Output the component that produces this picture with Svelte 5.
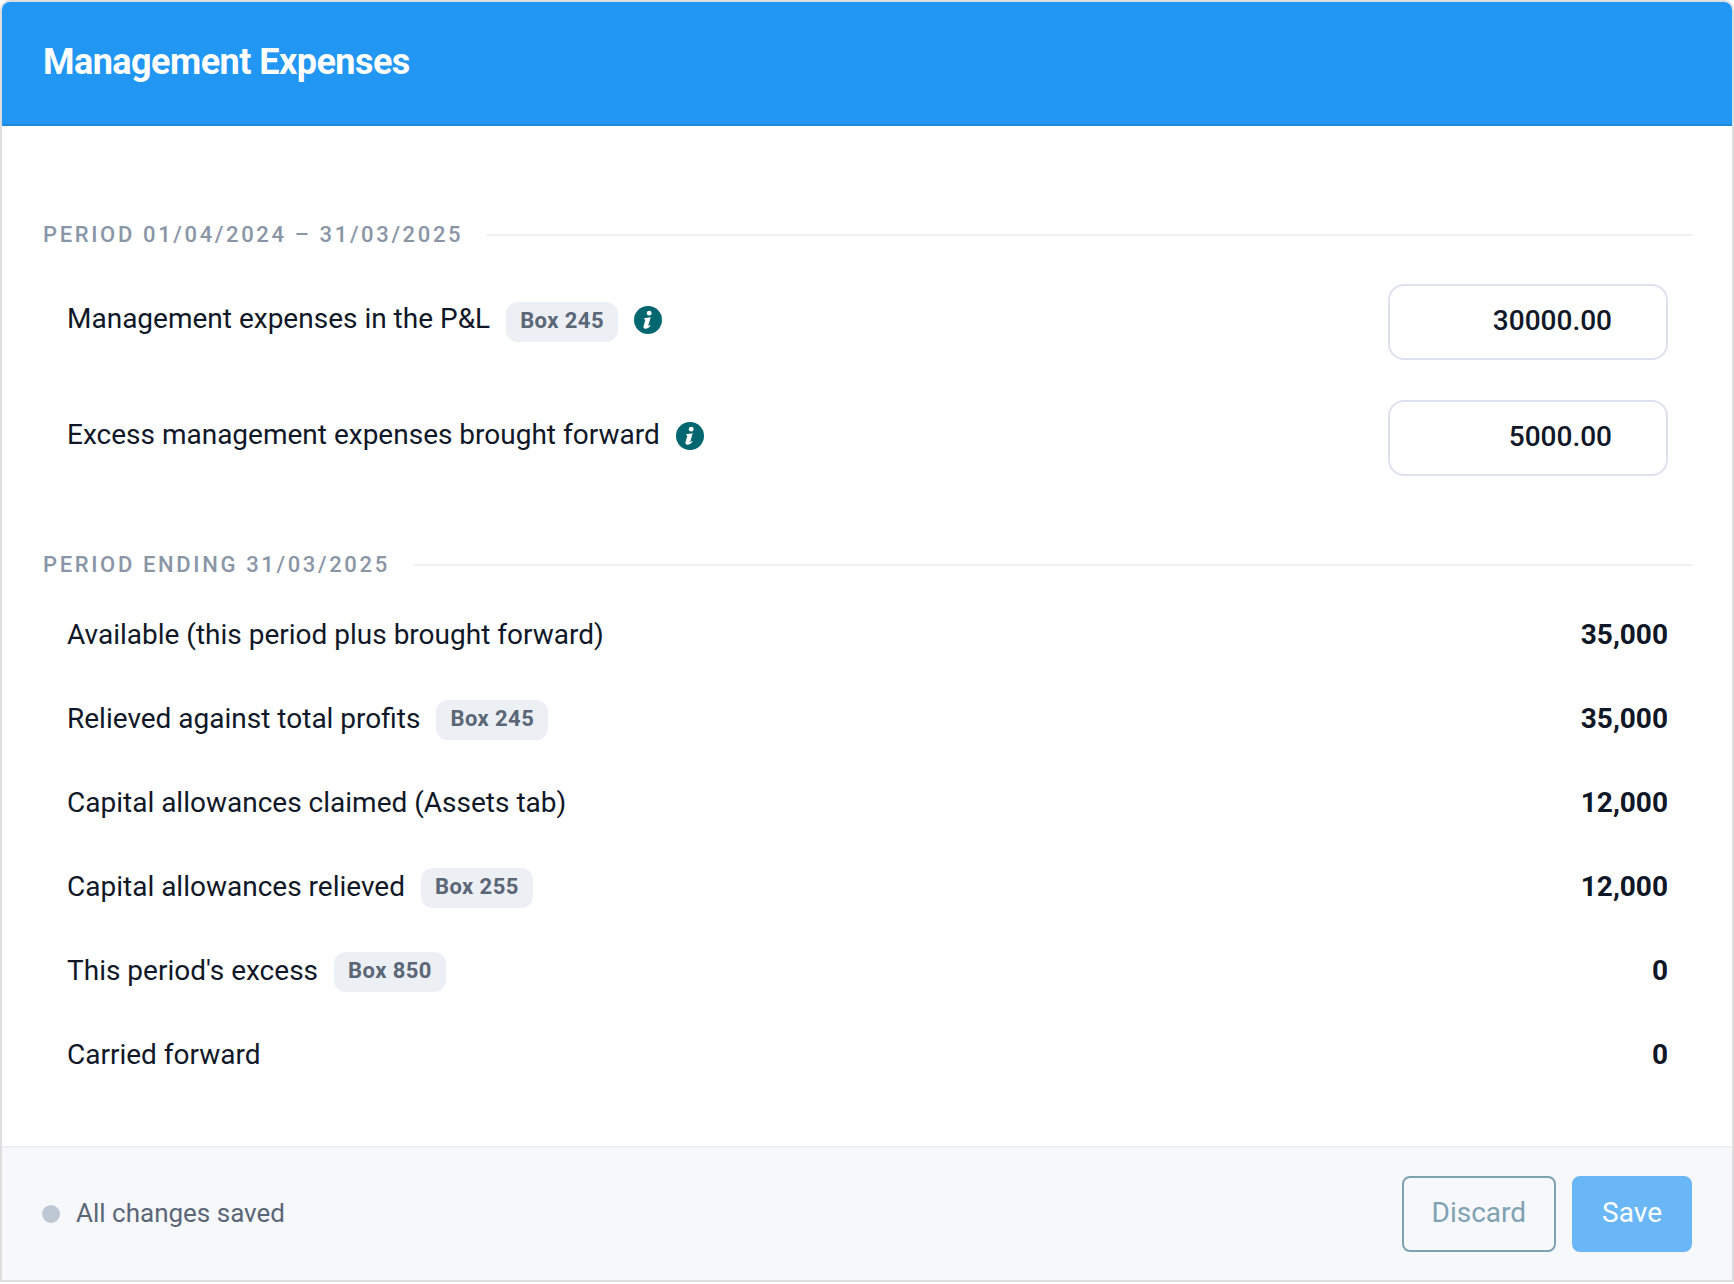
<script>
  let inputs = [
    { id: "pl", label: "Management expenses in the P&L", box: "Box 245", value: "30000.00" },
    { id: "bf", label: "Excess management expenses brought forward", box: "", value: "5000.00" }
  ];

  const results = [
    { label: "Available (this period plus brought forward)", value: "35,000" },
    { label: "Relieved against total profits", box: "Box 245", value: "35,000" },
    { label: "Capital allowances claimed (Assets tab)", value: "12,000" },
    { label: "Capital allowances relieved", box: "Box 255", value: "12,000" },
    { label: "This period's excess", box: "Box 850", value: "0" },
    { label: "Carried forward", value: "0" }
  ];
</script>

<form class="card" on:submit|preventDefault>
  <header class="card-header">
    <h1>Management Expenses</h1>
  </header>

  <div class="card-body">
    <h2 class="section-title">Period 01/04/2024 – 31/03/2025</h2>
    {#each inputs as row}
      <div class="row input-row">
        <div class="row-label">
          <label class="name" for={row.id}>{row.label}</label>
          {#if row.box}
            <span class="badge">{row.box}</span>
          {/if}
          <button type="button" class="info" aria-label="Info">
            <svg viewBox="0 0 28 28" width="28" height="28" aria-hidden="true">
              <circle cx="14" cy="14" r="14" fill="#006770" />
              <circle cx="15.2" cy="7.2" r="2.4" fill="#fff" />
              <path
                d="M10.2 12.3 L16.7 11.3 L14.3 19.4 C14.1 20.2 14.6 20.2 15.9 18.9 L16.7 19.6 C14.7 22 12.8 22.9 11.2 22.7 C9.4 22.4 9.2 21.1 9.6 19.7 L11.2 14.4 C11.4 13.6 11.1 13.4 10 13.3 Z"
                fill="#fff"
              />
            </svg>
          </button>
        </div>
        <input id={row.id} type="text" inputmode="decimal" bind:value={row.value} />
      </div>
    {/each}

    <h2 class="section-title results-title">Period ending 31/03/2025</h2>
    {#each results as row}
      <div class="row">
        <div class="row-label">
          <span class="name">{row.label}</span>
          {#if row.box}
            <span class="badge">{row.box}</span>
          {/if}
        </div>
        <span class="value">{row.value}</span>
      </div>
    {/each}
  </div>

  <footer class="card-footer">
    <span class="dot"></span>
    <span class="status">All changes saved</span>
    <button type="button" class="btn discard" disabled>Discard</button>
    <button type="submit" class="btn save" disabled>Save</button>
  </footer>
</form>

<style>
  :global(body) {
    background: #fff;
    font-family: Roboto, "Liberation Sans", sans-serif;
    color: #101828;
  }

  .card {
    margin: 2px;
    border-radius: 8px 8px 0 0;
    background: #fff;
    overflow: hidden;
    box-shadow:
      0 0 0 2px #dedede,
      0 4px 0 0 #cfcfcf;
  }

  .card-header {
    padding: 38px 40px 40px 41px;
    background: #2196f3;
    border-bottom: 2px solid #1e88dc;
  }

  h1 {
    margin: 0;
    font-size: 36px;
    line-height: 44px;
    font-weight: 700;
    letter-spacing: -0.015em;
    color: #fff;
  }

  .card-body {
    padding: 96px 40px 48px 41px;
  }

  .section-title {
    display: flex;
    align-items: center;
    gap: 24px;
    margin: 0 0 16px;
    font-size: 22px;
    line-height: 26px;
    font-weight: 500;
    letter-spacing: 0.12em;
    text-transform: uppercase;
    color: #8a96a6;
  }

  .section-title::after {
    content: "";
    flex: 1;
    height: 2px;
    background: #eceff4;
  }

  .results-title {
    margin-top: 56px;
  }

  .row {
    display: flex;
    align-items: center;
    justify-content: space-between;
    min-height: 84px;
    padding: 0 24px;
  }

  .input-row {
    min-height: 116px;
  }

  .row-label {
    display: flex;
    align-items: center;
    gap: 16px;
  }

  .name {
    padding-bottom: 2px;
    font-size: 28px;
    line-height: 36px;
  }

  .input-row .name {
    padding-bottom: 6px;
  }

  .badge {
    padding: 4px 14px 6px;
    border-radius: 12px;
    background: #eceff4;
    font-size: 22px;
    line-height: 30px;
    font-weight: 700;
    letter-spacing: 0.02em;
    color: #5b6777;
  }

  .info {
    display: flex;
    padding: 0 0 4px;
    border: none;
    background: none;
    cursor: pointer;
  }

  input {
    box-sizing: border-box;
    width: 280px;
    height: 76px;
    padding: 0 54px 4px 24px;
    border: 2px solid #dde2ee;
    border-radius: 16px;
    background: #fff;
    font-family: inherit;
    font-size: 28px;
    font-weight: 500;
    text-align: right;
    color: #101828;
  }

  .value {
    padding-bottom: 2px;
    font-size: 28px;
    line-height: 36px;
    font-weight: 700;
  }

  .card-footer {
    display: flex;
    align-items: center;
    gap: 16px;
    padding: 28px 40px;
    border-top: 2px solid #eceff4;
    background: #f6f8fc;
  }

  .dot {
    width: 18px;
    height: 18px;
    border-radius: 50%;
    background: #bec8d5;
  }

  .status {
    flex: 1;
    padding-bottom: 2px;
    font-size: 26px;
    line-height: 36px;
    color: #5b6777;
  }

  .btn {
    height: 76px;
    padding: 0 28px 4px;
    border: 2px solid;
    border-radius: 8px;
    font-family: inherit;
    font-size: 28px;
  }

  .discard {
    border-color: #7fa2b2;
    background: transparent;
    color: #7fa2b2;
  }

  .save {
    border-color: #6ab7f7;
    background: #6ab7f7;
    color: #fff;
  }
</style>
